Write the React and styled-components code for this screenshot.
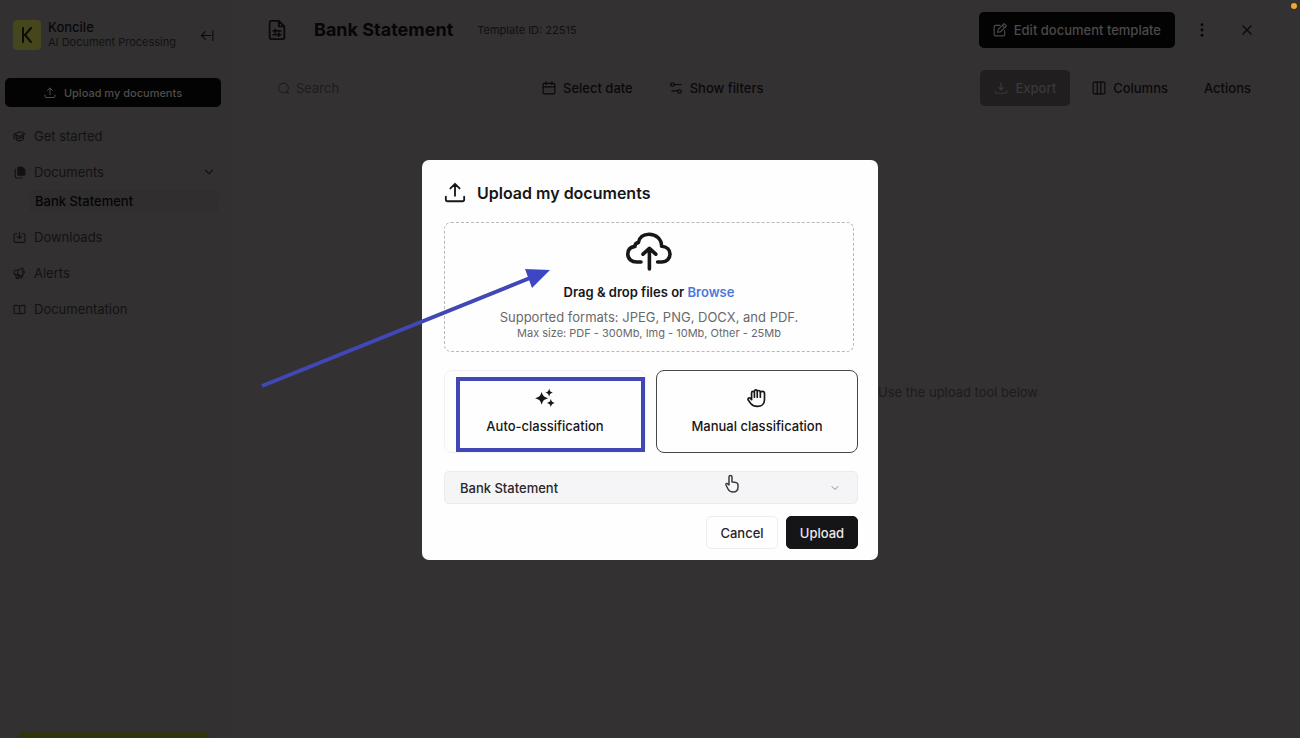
import React from "react";
import styled, { createGlobalStyle, css } from "styled-components";
import { X, ChevronDown } from "lucide-react";

const Global = createGlobalStyle`
  *, *::before, *::after { box-sizing: border-box; }
  html, body, #root { min-height: 100vh; margin: 0; }
  body { background: #343132; font-family: Inter, "Liberation Sans", sans-serif; font-size: 13px; line-height: 16px; color: #0b0a0b; }
  button, input, select { font: inherit; color: inherit; margin: 0; }
  button { cursor: pointer; }
  h1, h2, p, ul { margin: 0; padding: 0; }
`;

const Shell = styled.div`
  position: relative;
  display: flex;
  min-height: 100vh;
  overflow: hidden;
`;

const Icon = styled.svg.attrs((p) => ({
  viewBox: p.viewBox || "0 0 24 24",
  fill: p.$solid ? "currentColor" : "none",
  stroke: p.$solid ? "none" : "currentColor",
  strokeWidth: p.strokeWidth || 2,
  strokeLinecap: "round",
  strokeLinejoin: "round",
  "aria-hidden": true,
}))`
  width: ${(p) => p.$size || 14}px;
  height: ${(p) => p.$size || 14}px;
  flex: none;
`;

/* Sidebar */
const Sidebar = styled.aside`
  display: flex;
  flex-direction: column;
  flex: 0 0 232px;
  padding: 20px 11px 0 5px;
  background: #323031;
`;

const Brand = styled.div`
  display: flex;
  align-items: center;
  gap: 7px;
  padding: 0 7px 0 8px;
  margin-bottom: 28px;
`;

const Logo = styled.div`
  display: grid;
  place-items: center;
  width: 28px;
  height: 30px;
  border-radius: 4px;
  background: #45461c;
  color: #0d0d05;
`;

const BrandText = styled.div`
  flex: 1;
  white-space: nowrap;
  font-size: 11px;
  line-height: 15px;
  color: #131213;
`;

const BrandName = styled.div`
  font-size: 13px;
  font-weight: 500;
  color: #090809;
`;

const PlainButton = styled.button`
  display: grid;
  place-items: center;
  padding: 0;
  border: 0;
  background: none;
  color: #0b0a0b;
`;

const SidebarUpload = styled.button`
  display: flex;
  align-items: center;
  justify-content: center;
  gap: 8px;
  height: 29px;
  border: 0;
  border-radius: 5px;
  background: #040304;
  color: #4f4d4e;
  font-size: 11px;
  font-weight: 500;
`;

const Nav = styled.nav`
  display: flex;
  flex-direction: column;
  padding: 11px 2px 0 8px;
`;

const NavItem = styled.a`
  display: flex;
  align-items: center;
  gap: 8px;
  height: 36px;
  padding-right: 3px;
  color: #131213;
  text-decoration: none;

  span { flex: 1; }
`;

const SubItem = styled.a`
  display: flex;
  align-items: center;
  height: 22px;
  margin: 0 0 7px 16px;
  padding-left: 6px;
  border-radius: 4px;
  background: #302e2f;
  color: #060506;
  font-weight: 500;
  text-decoration: none;
`;

const Promo = styled.div`
  height: 6px;
  margin: auto 12px 0 14px;
  border-radius: 4px 4px 0 0;
  background: #34330f;
`;

/* Main */
const Main = styled.main`
  display: flex;
  flex-direction: column;
  flex: 1;
  min-width: 0;
`;

const Header = styled.header`
  display: flex;
  align-items: center;
  padding: 12px 45px 0 34px;
  height: 48px;
`;

const Title = styled.h1`
  margin-left: 26px;
  font-size: 18px;
  line-height: 24px;
  font-weight: 700;
  color: #070607;
`;

const TemplateId = styled.span`
  margin-left: 24px;
  font-size: 11px;
  color: #111011;
`;

const Actions = styled.div`
  display: flex;
  align-items: center;
  gap: ${(p) => p.$gap || 0}px;
  margin-left: auto;
`;

const ToolButton = styled.button`
  display: flex;
  align-items: center;
  gap: 7px;
  height: 36px;
  padding: 0 14px;
  border: 0;
  border-radius: 5px;
  background: none;
  color: #0a090a;
  font-weight: 500;
  white-space: nowrap;
  ${(p) => p.$variant === "primary" && css`background: #040304; color: #4b494a;`}
  ${(p) => p.$variant === "muted" && css`background: #201e1f; color: #3a3839;`}
`;

const HeaderIcons = styled.div`
  display: flex;
  gap: 30px;
`;

const Toolbar = styled.div`
  display: flex;
  align-items: center;
  padding: 22px 35px 0 36px;
`;

const Search = styled.label`
  display: flex;
  align-items: center;
  gap: 6px;
  width: 260px;
  height: 36px;
  padding-left: 9px;
  color: #1e1c1d;

  input {
    flex: 1;
    min-width: 0;
    padding: 0;
    border: 0;
    outline: 0;
    background: none;
  }
  input::placeholder { color: #1e1c1d; opacity: 1; }
`;

const Filters = styled.div`
  display: flex;
  gap: 8px;
`;

const Empty = styled.p`
  margin-top: 278px;
  padding-right: 262px;
  text-align: right;
  color: #1d1b1c;
`;

/* Upload dialog */
const Overlay = styled.div`
  position: absolute;
  inset: 0;
  display: grid;
  place-items: center;
  padding-bottom: 18px;
`;

const Dialog = styled.section`
  display: flex;
  flex-direction: column;
  width: 456px;
  padding: 21px 20px 11px 22px;
  border-radius: 7px;
  background: #fefefe;
  color: #171618;
`;

const DialogTitle = styled.h2`
  display: flex;
  align-items: center;
  gap: 11px;
  margin-bottom: 17px;
  font-size: 16px;
  line-height: 24px;
  font-weight: 600;
`;

const DropZone = styled.div`
  display: flex;
  flex-direction: column;
  align-items: center;
  height: 130px;
  margin-right: 4px;
  padding-top: 5px;
  border: 1px dashed #b9b7ba;
  border-radius: 7px;
  white-space: nowrap;
`;

const DropTitle = styled.p`
  margin: 8px 0 9px;
  font-weight: 600;

  a { color: #4b78dc; text-decoration: none; }
`;

const Hint = styled.p`
  font-size: ${(p) => (p.$small ? 11 : 13)}px;
  color: #6a696b;
`;

const Modes = styled.div`
  display: grid;
  grid-template-columns: 1fr 1fr;
  gap: 10px;
  margin: 18px 0;
`;

const Mode = styled.button`
  display: flex;
  flex-direction: column;
  align-items: center;
  gap: 10px;
  height: 83px;
  padding: 17px 0 0;
  border: 1px solid ${(p) => (p.$selected ? "#47464a" : "#f1f0f2")};
  border-radius: 8px;
  background: #fefefe;
  font-weight: 500;
`;

const SelectBox = styled.div`
  display: grid;
  align-items: center;
  color: #8a898c;

  select, svg { grid-area: 1 / 1; }
  svg { justify-self: end; margin-right: 17px; pointer-events: none; }
  select {
    appearance: none;
    width: 100%;
    height: 33px;
    padding: 0 15px;
    border: 1px solid #ebeaec;
    border-radius: 5px;
    background: #f5f4f6;
    color: #28272a;
    font-weight: 500;
  }
`;

const Footer = styled.div`
  display: flex;
  justify-content: flex-end;
  gap: 8px;
  margin-top: 12px;
`;

const DialogButton = styled.button`
  height: 33px;
  width: 72px;
  padding: 0;
  border: 1px solid ${(p) => (p.$primary ? "#151416" : "#eeedef")};
  border-radius: 5px;
  background: ${(p) => (p.$primary ? "#151416" : "#fefefe")};
  color: ${(p) => (p.$primary ? "#e9e8ea" : "#242326")};
  font-weight: 500;
`;

/* Annotations drawn over the page */
const Annotation = styled.svg`
  position: absolute;
  left: calc(50% - 390px);
  top: calc(50% - 109px);
  width: 400px;
  height: 200px;
  pointer-events: none;
`;

const Pointer = styled.svg`
  position: absolute;
  left: calc(50% + 74px);
  top: calc(50% + 105px);
  width: 16px;
  height: 20px;
  pointer-events: none;
`;

const RecordingDot = styled.span`
  position: absolute;
  top: 3px;
  right: 3px;
  width: 6px;
  height: 6px;
  border-radius: 50%;
  background: #f0a534;
`;

const UploadIcon = (p) => (
  <Icon {...p}><path d="M2 16v3a2 2 0 0 0 2 2h16a2 2 0 0 0 2-2v-3M12 15V2M7 7l5-5 5 5" /></Icon>
);
const DownloadIcon = (p) => (
  <Icon {...p}><path d="M2 17v2a2 2 0 0 0 2 2h16a2 2 0 0 0 2-2v-2M12 3v12M8 11l4 4 4-4" /></Icon>
);
const CollapseIcon = (p) => (
  <Icon {...p}><path d="M22 3v18M18 12H1M8 5l-7 7 7 7" /></Icon>
);
const CapIcon = (p) => (
  <Icon {...p}><path d="M2 8l11-5 9 4-10 5zM2 8v8M6 11v7c3 3 9 3 13-1v-7M8 15c3 1 7 0 10-3" /></Icon>
);
const FilesIcon = (p) => (
  <Icon {...p}>
    <path d="M11 2h6l5 5v8a2 2 0 0 1-2 2h-9a2 2 0 0 1-2-2V4a2 2 0 0 1 2-2z" fill="currentColor" />
    <path d="M4 6v13a3 3 0 0 0 3 3h10" />
  </Icon>
);
const InboxIcon = (p) => (
  <Icon {...p}><path d="M7 5H4a2 2 0 0 0-2 2v12a2 2 0 0 0 2 2h16a2 2 0 0 0 2-2V7a2 2 0 0 0-2-2h-3M12 2v12M8 10l4 4 4-4" /></Icon>
);
const MegaphoneIcon = (p) => (
  <Icon {...p}><path d="M9 6l9-4v15l-9-3H5a3 3 0 0 1-3-3V9a3 3 0 0 1 3-3zM9 6v8M18 7c4-1 4 6 0 5M5 14l1 7h4l-1-7M12 15l1 5h3v-3" /></Icon>
);
const BookIcon = (p) => (
  <Icon {...p}><path d="M12 5v15M12 5c-2-1-6-1-10-1v15c4 0 8 0 10 1 2-1 6-1 10-1V4c-4 0-8 0-10 1z" /></Icon>
);
const DocIcon = (p) => (
  <Icon {...p}><path d="M14 2H6a2 2 0 0 0-2 2v16a2 2 0 0 0 2 2h12a2 2 0 0 0 2-2V8zM14 2v6h6M8 13h8M8 17h8M10 11.500v3M14 15.500v3" /></Icon>
);
const SearchIcon = (p) => (
  <Icon {...p}><circle cx="12" cy="11" r="9" /><path d="M18 18l3 3" /></Icon>
);
const CalendarIcon = (p) => (
  <Icon {...p}><rect x="2" y="4" width="20" height="18" rx="2" /><path d="M7 1v5M17 1v5M2 10h20" /></Icon>
);
const FilterIcon = (p) => (
  <Icon {...p}><circle cx="6" cy="6" r="3" /><path d="M2 6h1M9 6h12M5 17h10" /><circle cx="18" cy="18" r="3" /></Icon>
);
const ColumnsIcon = (p) => (
  <Icon {...p}><rect x="2" y="2" width="20" height="20" rx="2" /><path d="M9 2v20M15 2v20" /></Icon>
);
const EditIcon = (p) => (
  <Icon {...p}><path d="M12 4H4a2 2 0 0 0-2 2v14a2 2 0 0 0 2 2h14a2 2 0 0 0 2-2v-7M8 16l1-5L19 1l4 4-10 10zM16 4l4 4" /></Icon>
);
const DotsIcon = (p) => (
  <Icon $solid {...p}><circle cx="12" cy="3" r="2.5" /><circle cx="12" cy="12" r="2.5" /><circle cx="12" cy="21" r="2.5" /></Icon>
);
const CloudIcon = () => (
  <Icon $size={48} strokeWidth="1.8">
    <path d="M8 17H5.800C3.300 17 1.400 15.400 1.400 13C1.400 11 2.700 9.500 5 9.200C4.900 8 5.500 7.500 6.700 7.300C7.100 4.700 9.200 3.100 12 3.100C15.500 3.100 18.300 5.500 18.300 9.100C21 9.300 22.500 10.900 22.500 13C22.500 15.300 20.800 17 18.500 17H16.300M12.200 20.500V10.400M9 13.100l3.200-2.900 3.200 2.900" />
  </Icon>
);
const SparklesIcon = () => (
  <Icon $solid $size={20}>
    <path d="M8 4.500c1.300 5 2.700 6.400 8 7.700-5.300 1.300-6.700 2.700-8 8-1.300-5.300-2.700-6.700-8-8 5.300-1.300 6.700-2.700 8-7.700zM17 .500c.9 3.500 1.500 4.100 5 5-3.500.9-4.100 1.500-5 5-.9-3.500-1.500-4.100-5-5 3.500-.9 4.100-1.500 5-5zM19 13c.9 3.500 1.500 4.100 5 5-3.500.9-4.100 1.500-5 5-.9-3.500-1.500-4.100-5-5 3.500-.9 4.100-1.500 5-5z" />
  </Icon>
);
const HandIcon = () => (
  <Icon $size={20}>
    <path d="M5.500 14V5.800a1.700 1.700 0 0 1 3.400 0V4a1.700 1.700 0 0 1 3.400 0v.8a1.700 1.700 0 0 1 3.600 0v1.700a1.800 1.800 0 0 1 5.100 0v7.500c0 5-3.500 8-8.500 8-4 0-6-1-8-3.500l-3-4a1.600 1.600 0 0 1 2.500-2l1.500 1.500M8.900 5v6M12.300 4v7M16 5v6" />
  </Icon>
);

export default function App() {
  return (
    <>
      <Global />
      <Shell>
        <Sidebar>
          <Brand>
            <Logo><Icon viewBox="0 0 14 18" $size={18} strokeWidth="2"><path d="M3 2v14M11 2L5 9l6 7M3 9h2" /></Icon></Logo>
            <BrandText><BrandName>Koncile</BrandName>AI Document Processing</BrandText>
            <PlainButton aria-label="Collapse sidebar"><CollapseIcon $size={13} /></PlainButton>
          </Brand>
          <SidebarUpload><UploadIcon $size={12} />Upload my documents</SidebarUpload>
          <Nav>
            <NavItem href="#start"><CapIcon $size={13} /><span>Get started</span></NavItem>
            <NavItem href="#documents"><FilesIcon $size={13} /><span>Documents</span><ChevronDown size={14} /></NavItem>
            <SubItem href="#bank">Bank Statement</SubItem>
            <NavItem href="#downloads"><InboxIcon $size={13} /><span>Downloads</span></NavItem>
            <NavItem href="#alerts"><MegaphoneIcon $size={13} /><span>Alerts</span></NavItem>
            <NavItem href="#docs"><BookIcon $size={13} /><span>Documentation</span></NavItem>
          </Nav>
          <Promo />
        </Sidebar>
        <Main>
          <Header>
            <DocIcon $size={22} />
            <Title>Bank Statement</Title>
            <TemplateId>Template ID: 22515</TemplateId>
            <Actions $gap={20}>
              <ToolButton $variant="primary"><EditIcon />Edit document template</ToolButton>
              <HeaderIcons>
                <PlainButton aria-label="More"><DotsIcon $size={14} /></PlainButton>
                <PlainButton aria-label="Close"><X size={16} /></PlainButton>
              </HeaderIcons>
            </Actions>
          </Header>
          <Toolbar>
            <Search><SearchIcon $size={13} /><input aria-label="Search" placeholder="Search" /></Search>
            <Filters>
              <ToolButton><CalendarIcon />Select date</ToolButton>
              <ToolButton><FilterIcon />Show filters</ToolButton>
            </Filters>
            <Actions $gap={8}>
              <ToolButton $variant="muted"><DownloadIcon />Export</ToolButton>
              <ToolButton><ColumnsIcon />Columns</ToolButton>
              <ToolButton>Actions</ToolButton>
            </Actions>
          </Toolbar>
          <Empty>Use the upload tool below</Empty>
        </Main>
        <Overlay>
          <Dialog role="dialog" aria-labelledby="upload-title">
            <DialogTitle id="upload-title"><UploadIcon $size={22} />Upload my documents</DialogTitle>
            <DropZone>
              <CloudIcon />
              <DropTitle>Drag &amp; drop files or <a href="#browse">Browse</a></DropTitle>
              <Hint>Supported formats: JPEG, PNG, DOCX, and PDF.</Hint>
              <Hint $small>Max size: PDF - 300Mb, Img - 10Mb, Other - 25Mb</Hint>
            </DropZone>
            <Modes>
              <Mode><SparklesIcon />Auto-classification</Mode>
              <Mode $selected><HandIcon />Manual classification</Mode>
            </Modes>
            <SelectBox>
              <select aria-label="Document template"><option>Bank Statement</option></select>
              <ChevronDown size={12} />
            </SelectBox>
            <Footer>
              <DialogButton>Cancel</DialogButton>
              <DialogButton $primary>Upload</DialogButton>
            </Footer>
          </Dialog>
        </Overlay>
        <Annotation viewBox="260 260 400 200" aria-hidden="true">
          <path d="M262 386L530 278" stroke="#4147b5" strokeWidth="4" />
          <path d="M525 269L550 270L532 288Z" fill="#3f46c4" />
          <rect x="458" y="379" width="185" height="71" fill="none" stroke="#4147b5" strokeWidth="4" />
        </Annotation>
        <Pointer viewBox="0 0 16 20" aria-hidden="true">
          <path d="M5 10V3a1.500 1.500 0 0 1 3 0v5c3 0 6 1 6 3v2c0 3-2 5-5 5-3 0-4-1-5-3l-2-4c-.5-1.500 1-2 2-1l1 1z" fill="#f8f7f9" stroke="#3c3b3f" strokeWidth="1.500" strokeLinejoin="round" />
        </Pointer>
        <RecordingDot />
      </Shell>
    </>
  );
}
